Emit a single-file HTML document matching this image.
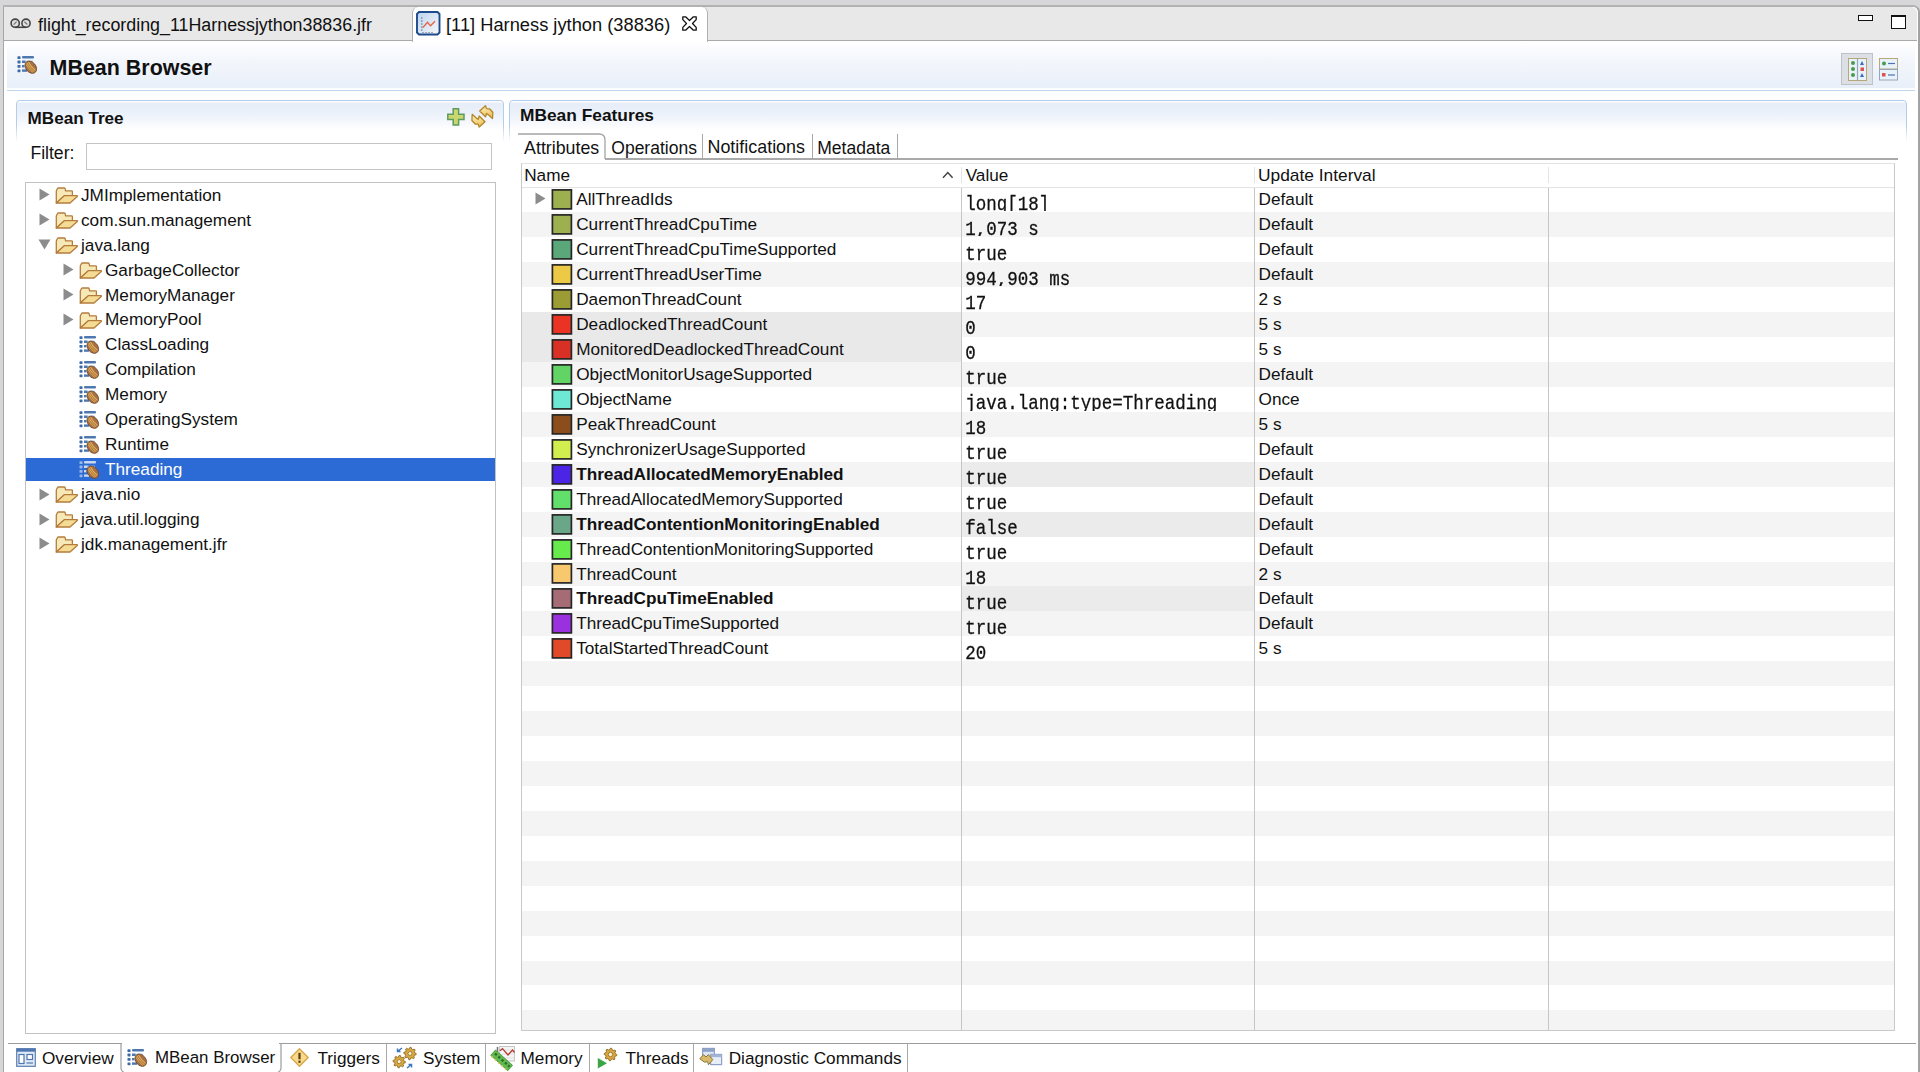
<!DOCTYPE html>
<html><head><meta charset="utf-8">
<style>
*{box-sizing:border-box;margin:0;padding:0}
html,body{width:1920px;height:1072px;overflow:hidden;background:#d7d7d9;font-family:"Liberation Sans",sans-serif;color:#111;font-size:17.2px}
.abs{position:absolute}
.t{position:absolute;white-space:nowrap;line-height:1}
svg{overflow:visible}
</style></head><body>
<div class="abs" style="left:3px;top:5px;width:1917px;height:1067px;background:#fff;border-left:1px solid #a6a6a6;border-top:2px solid #b2b2b2;border-right:2px solid #a3a3a3;border-top-right-radius:7px"></div>
<div class="abs" style="left:4px;top:7px;width:1913px;height:34px;background:#e8e8e8;border-bottom:1px solid #a9a9a9;border-top-right-radius:6px"></div>
<div class="abs" style="left:412px;top:7px;width:296px;height:35px;background:#fff;border-left:1px solid #b0b0b0;border-right:1px solid #b0b0b0;border-radius:6px 6px 0 0"></div>
<svg class="abs" style="left:10px;top:18px" width="22" height="12" viewBox="0 0 22 12"><circle cx="5.2" cy="5.2" r="4.1" fill="#e0e0e0" stroke="#444" stroke-width="1.6"/><circle cx="16" cy="5.2" r="4.1" fill="#e0e0e0" stroke="#444" stroke-width="1.6"/><path d="M5.2,9.3 L16,9.3" stroke="#444" stroke-width="1.6"/><path d="M3.6,6.6 L6.6,3.6" stroke="#777" stroke-width="1.3"/><path d="M14.4,3.8 L17.4,6.6" stroke="#777" stroke-width="1.3"/></svg>
<div class="t" style="left:38px;top:16.69px;font-size:17.85px;color:#111;font-family:'Liberation Sans',sans-serif;">flight_recording_11Harnessjython38836.jfr</div>
<svg class="abs" style="left:416px;top:11px" width="25" height="25" viewBox="0 0 25 25"><defs><linearGradient id="cg" x1="0" y1="0" x2="1" y2="1"><stop offset="0" stop-color="#bcd3f0"/><stop offset="1" stop-color="#f8f8f8"/></linearGradient></defs><path d="M3,1 L21.5,1 L23.5,3 L23.5,21.5 L21.5,23.5 L3,23.5 L1,21.5 L1,3 Z" fill="url(#cg)" stroke="#1d4a8c" stroke-width="1.9"/><path d="M6.8,16.6 L11.5,11.3 L14.5,14.8 L19,10.2" fill="none" stroke="#e8603c" stroke-width="1.3"/><path d="M5,7 h1.5 M5,10 h1.5 M5,13 h1.5 M5,16 h1.5 M5,19 h1.5 M7,21 v1 M10,21 v1 M13,21 v1 M16,21 v1" stroke="#4a6a80" stroke-width="1"/></svg>
<div class="t" style="left:446px;top:16.31px;font-size:18.3px;color:#111;font-family:'Liberation Sans',sans-serif;">[11] Harness jython (38836)</div>
<svg class="abs" style="left:682px;top:16px" width="15" height="15" viewBox="0 0 15 15"><path d="M0.8,0.8 L3.6,0.8 L7.5,4.5 L11.4,0.8 L14.2,0.8 L14.2,3.6 L10.5,7.5 L14.2,11.4 L14.2,14.2 L11.4,14.2 L7.5,10.5 L3.6,14.2 L0.8,14.2 L0.8,11.4 L4.5,7.5 L0.8,3.6 Z" fill="none" stroke="#111" stroke-width="1.3" stroke-linejoin="round"/></svg>
<div class="abs" style="left:1858px;top:15px;width:15px;height:5.5px;border:1.5px solid #111;background:#fff"></div>
<div class="abs" style="left:1891px;top:15px;width:14.5px;height:14px;border:1.5px solid #111;border-top-width:2.5px;background:#fff"></div>
<div class="abs" style="left:7px;top:42px;width:1908px;height:47px;background:linear-gradient(#ffffff 0%,#f4f7fc 35%,#e8eff9 100%)"></div>
<div class="abs" style="left:7px;top:88px;width:1908px;height:1px;background:#fbfcfe"></div>
<div class="abs" style="left:7px;top:89.6px;width:1908px;height:1.2px;background:#bed4ef"></div>
<svg class="abs" style="left:17px;top:55px" width="21" height="20" viewBox="0 0 21 20"><rect x="0.5" y="1.2" width="3" height="2.8" rx="0.6" fill="#3f6aa8"/><rect x="0.5" y="5.6" width="3" height="2.8" rx="0.6" fill="#3f6aa8"/><rect x="0.5" y="10.0" width="3" height="2.8" rx="0.6" fill="#3f6aa8"/><rect x="0.5" y="14.4" width="3" height="2.8" rx="0.6" fill="#3f6aa8"/><rect x="5" y="1.0" width="12" height="2.4" rx="1" fill="#4d78b0"/><rect x="5" y="5.6" width="11" height="2.4" fill="#a9c4e4" opacity="0.8"/><rect x="5" y="5.6" width="3.5" height="2.4" fill="#4d78b0"/><rect x="5" y="10" width="2.5" height="2.4" fill="#4d78b0"/><rect x="5" y="14.4" width="5" height="2.4" fill="#4d78b0"/><g transform="translate(13.8,12.2) rotate(50)"><ellipse cx="0" cy="0" rx="6.8" ry="5.0" fill="#a86f45" stroke="#6e4526" stroke-width="0.8"/><path d="M-5.5,-1.6 Q0,-0.2 5.5,-1.6" stroke="#e0b060" stroke-width="1.1" fill="none"/><path d="M-5.2,1.8 Q0,3.0 5.2,1.8" stroke="#d8a458" stroke-width="1.0" fill="none"/><path d="M-6,0.2 Q0,1.5 6,0.2" stroke="#e8c040" stroke-width="0.9" fill="none"/></g></svg>
<div class="t" style="left:49.6px;top:58.04px;font-size:21.45px;font-weight:bold;color:#111;font-family:'Liberation Sans',sans-serif;">MBean Browser</div>
<div class="abs" style="left:1841px;top:53px;width:32px;height:32px;background:#dcdfe4;border:1px solid #bfc3c9"></div>
<svg class="abs" style="left:1848px;top:58px" width="19" height="23" viewBox="0 0 19 23"><rect x="0.5" y="0.5" width="18" height="22" fill="#e8f2fa" stroke="#b6a878" stroke-width="1"/><path d="M9.5,0.5 V22.5" stroke="#9aa4b8" stroke-width="1.2"/><circle cx="5" cy="5" r="2" fill="#4a9a4a"/><circle cx="5" cy="11" r="2" fill="#4a9a4a"/><circle cx="5" cy="17" r="2" fill="#4a9a4a"/><path d="M12,7 L14,3 L16,7 Z" fill="#3a6ac0"/><rect x="12.5" y="9.5" width="3.5" height="3.5" fill="#e05050"/><path d="M12,19 L14,15 L16,19 Z" fill="#3a6ac0"/></svg>
<svg class="abs" style="left:1879px;top:58px" width="19" height="23" viewBox="0 0 19 23"><rect x="0.5" y="0.5" width="18" height="10.5" fill="#e8f2fa" stroke="#b6a878" stroke-width="1"/><rect x="0.5" y="11.5" width="18" height="10.5" fill="#e8f2fa" stroke="#9aa4b8" stroke-width="1"/><circle cx="5" cy="5.5" r="2" fill="#4a9a4a"/><path d="M9,5.5 H16" stroke="#5070b0" stroke-width="1.2"/><rect x="3" y="15" width="3.5" height="3.5" fill="#e05050"/><path d="M9,17 H16" stroke="#5070b0" stroke-width="1.2"/></svg>
<div class="abs" style="left:16px;top:100px;width:488px;height:42px;border:1px solid #b3cdeb;border-bottom:none;border-radius:4px 4px 0 0;background:linear-gradient(#fafcfe 0px,#fafcfe 1px,#e6edf8 2.5px,#ebf1fa 12px,#ffffff 30px);-webkit-mask-image:linear-gradient(#000 60%,transparent 100%)"></div>
<div class="t" style="left:27.6px;top:110.12px;font-size:17.1px;font-weight:bold;color:#111;font-family:'Liberation Sans',sans-serif;">MBean Tree</div>
<svg class="abs" style="left:447px;top:108px" width="18" height="18" viewBox="0 0 18 18"><path d="M6.2,0.8 H11.6 V6.2 H17 V11.6 H11.6 V17 H6.2 V11.6 H0.8 V6.2 H6.2 Z" fill="#c9d86e" stroke="#5f9a60" stroke-width="1.5"/></svg>
<svg class="abs" style="left:470px;top:103px" width="26" height="26" viewBox="0 0 26 26"><defs><linearGradient id="rg" x1="0" y1="0" x2="0.3" y2="1"><stop offset="0" stop-color="#fdf3cc"/><stop offset="1" stop-color="#eec25a"/></linearGradient></defs><g stroke="#b38628" stroke-width="1.3" stroke-linejoin="round" fill="url(#rg)"><path d="M9.7,8 L15.5,2.7 L16.5,5.6 L19.5,5.8 L22.8,9.3 L22.5,15.5 L18.4,11.7 L16.5,10.5 L15.5,13.8 Z"/><path d="M15,18.8 L9.2,24.1 L8.2,21.2 L5.2,21 L1.9,17.5 L2.2,11.3 L6.3,15.1 L8.2,16.3 L9.2,13 Z"/></g></svg>
<div class="t" style="left:30.4px;top:144.80px;font-size:17.6px;color:#111;font-family:'Liberation Sans',sans-serif;">Filter:</div>
<div class="abs" style="left:86px;top:143px;width:406px;height:27px;border:1px solid #c4c4c4;background:#fff"></div>
<div class="abs" style="left:25px;top:182px;width:471px;height:852px;border:1px solid #c2c2c2;background:#fff"></div>
<svg class="abs" style="left:39px;top:188px" width="11" height="13" viewBox="0 0 11 13"><path d="M0.5,0.5 L10.5,6.5 L0.5,12.5 Z" fill="#8c8c8c"/></svg>
<svg class="abs" style="left:55px;top:187px" width="24" height="18" viewBox="0 0 24 18"><path d="M1.3,16 V4 L2.5,1.5 Q2.8,1 3.6,1 H9.2 Q10,1 10.2,1.8 L10.6,3.8 H16.6 Q17.4,3.8 17.4,4.6 V9 H9.3 Z" fill="#f7e8b8" stroke="#b47c3c" stroke-width="1.3" stroke-linejoin="round"/><path d="M1.3,16 L9.3,8.7 H22 Q22.8,8.7 22.3,9.4 L15,16 Z" fill="#f5dc94" stroke="#b47c3c" stroke-width="1.3" stroke-linejoin="round"/></svg>
<div class="t" style="left:81px;top:186.74px;font-size:17.2px;color:#111;font-family:'Liberation Sans',sans-serif;">JMImplementation</div>
<svg class="abs" style="left:39px;top:213px" width="11" height="13" viewBox="0 0 11 13"><path d="M0.5,0.5 L10.5,6.5 L0.5,12.5 Z" fill="#8c8c8c"/></svg>
<svg class="abs" style="left:55px;top:212px" width="24" height="18" viewBox="0 0 24 18"><path d="M1.3,16 V4 L2.5,1.5 Q2.8,1 3.6,1 H9.2 Q10,1 10.2,1.8 L10.6,3.8 H16.6 Q17.4,3.8 17.4,4.6 V9 H9.3 Z" fill="#f7e8b8" stroke="#b47c3c" stroke-width="1.3" stroke-linejoin="round"/><path d="M1.3,16 L9.3,8.7 H22 Q22.8,8.7 22.3,9.4 L15,16 Z" fill="#f5dc94" stroke="#b47c3c" stroke-width="1.3" stroke-linejoin="round"/></svg>
<div class="t" style="left:81px;top:211.68px;font-size:17.2px;color:#111;font-family:'Liberation Sans',sans-serif;">com.sun.management</div>
<svg class="abs" style="left:38px;top:239px" width="13" height="11" viewBox="0 0 13 11"><path d="M0.5,0.5 L12.5,0.5 L6.5,10.5 Z" fill="#8c8c8c"/></svg>
<svg class="abs" style="left:55px;top:237px" width="24" height="18" viewBox="0 0 24 18"><path d="M1.3,16 V4 L2.5,1.5 Q2.8,1 3.6,1 H9.2 Q10,1 10.2,1.8 L10.6,3.8 H16.6 Q17.4,3.8 17.4,4.6 V9 H9.3 Z" fill="#f7e8b8" stroke="#b47c3c" stroke-width="1.3" stroke-linejoin="round"/><path d="M1.3,16 L9.3,8.7 H22 Q22.8,8.7 22.3,9.4 L15,16 Z" fill="#f5dc94" stroke="#b47c3c" stroke-width="1.3" stroke-linejoin="round"/></svg>
<div class="t" style="left:81px;top:236.62px;font-size:17.2px;color:#111;font-family:'Liberation Sans',sans-serif;">java.lang</div>
<svg class="abs" style="left:63px;top:263px" width="11" height="13" viewBox="0 0 11 13"><path d="M0.5,0.5 L10.5,6.5 L0.5,12.5 Z" fill="#8c8c8c"/></svg>
<svg class="abs" style="left:79px;top:262px" width="24" height="18" viewBox="0 0 24 18"><path d="M1.3,16 V4 L2.5,1.5 Q2.8,1 3.6,1 H9.2 Q10,1 10.2,1.8 L10.6,3.8 H16.6 Q17.4,3.8 17.4,4.6 V9 H9.3 Z" fill="#f7e8b8" stroke="#b47c3c" stroke-width="1.3" stroke-linejoin="round"/><path d="M1.3,16 L9.3,8.7 H22 Q22.8,8.7 22.3,9.4 L15,16 Z" fill="#f5dc94" stroke="#b47c3c" stroke-width="1.3" stroke-linejoin="round"/></svg>
<div class="t" style="left:105px;top:261.56px;font-size:17.2px;color:#111;font-family:'Liberation Sans',sans-serif;">GarbageCollector</div>
<svg class="abs" style="left:63px;top:288px" width="11" height="13" viewBox="0 0 11 13"><path d="M0.5,0.5 L10.5,6.5 L0.5,12.5 Z" fill="#8c8c8c"/></svg>
<svg class="abs" style="left:79px;top:287px" width="24" height="18" viewBox="0 0 24 18"><path d="M1.3,16 V4 L2.5,1.5 Q2.8,1 3.6,1 H9.2 Q10,1 10.2,1.8 L10.6,3.8 H16.6 Q17.4,3.8 17.4,4.6 V9 H9.3 Z" fill="#f7e8b8" stroke="#b47c3c" stroke-width="1.3" stroke-linejoin="round"/><path d="M1.3,16 L9.3,8.7 H22 Q22.8,8.7 22.3,9.4 L15,16 Z" fill="#f5dc94" stroke="#b47c3c" stroke-width="1.3" stroke-linejoin="round"/></svg>
<div class="t" style="left:105px;top:286.50px;font-size:17.2px;color:#111;font-family:'Liberation Sans',sans-serif;">MemoryManager</div>
<svg class="abs" style="left:63px;top:313px" width="11" height="13" viewBox="0 0 11 13"><path d="M0.5,0.5 L10.5,6.5 L0.5,12.5 Z" fill="#8c8c8c"/></svg>
<svg class="abs" style="left:79px;top:312px" width="24" height="18" viewBox="0 0 24 18"><path d="M1.3,16 V4 L2.5,1.5 Q2.8,1 3.6,1 H9.2 Q10,1 10.2,1.8 L10.6,3.8 H16.6 Q17.4,3.8 17.4,4.6 V9 H9.3 Z" fill="#f7e8b8" stroke="#b47c3c" stroke-width="1.3" stroke-linejoin="round"/><path d="M1.3,16 L9.3,8.7 H22 Q22.8,8.7 22.3,9.4 L15,16 Z" fill="#f5dc94" stroke="#b47c3c" stroke-width="1.3" stroke-linejoin="round"/></svg>
<div class="t" style="left:105px;top:311.44px;font-size:17.2px;color:#111;font-family:'Liberation Sans',sans-serif;">MemoryPool</div>
<svg class="abs" style="left:79px;top:335px" width="21" height="20" viewBox="0 0 21 20"><rect x="0.5" y="1.2" width="3" height="2.8" rx="0.6" fill="#3f6aa8"/><rect x="0.5" y="5.6" width="3" height="2.8" rx="0.6" fill="#3f6aa8"/><rect x="0.5" y="10.0" width="3" height="2.8" rx="0.6" fill="#3f6aa8"/><rect x="0.5" y="14.4" width="3" height="2.8" rx="0.6" fill="#3f6aa8"/><rect x="5" y="1.0" width="12" height="2.4" rx="1" fill="#4d78b0"/><rect x="5" y="5.6" width="11" height="2.4" fill="#a9c4e4" opacity="0.8"/><rect x="5" y="5.6" width="3.5" height="2.4" fill="#4d78b0"/><rect x="5" y="10" width="2.5" height="2.4" fill="#4d78b0"/><rect x="5" y="14.4" width="5" height="2.4" fill="#4d78b0"/><g transform="translate(13.8,12.2) rotate(50)"><ellipse cx="0" cy="0" rx="6.8" ry="5.0" fill="#a86f45" stroke="#6e4526" stroke-width="0.8"/><path d="M-5.5,-1.6 Q0,-0.2 5.5,-1.6" stroke="#e0b060" stroke-width="1.1" fill="none"/><path d="M-5.2,1.8 Q0,3.0 5.2,1.8" stroke="#d8a458" stroke-width="1.0" fill="none"/><path d="M-6,0.2 Q0,1.5 6,0.2" stroke="#e8c040" stroke-width="0.9" fill="none"/></g></svg>
<div class="t" style="left:105px;top:336.38px;font-size:17.2px;color:#111;font-family:'Liberation Sans',sans-serif;">ClassLoading</div>
<svg class="abs" style="left:79px;top:360px" width="21" height="20" viewBox="0 0 21 20"><rect x="0.5" y="1.2" width="3" height="2.8" rx="0.6" fill="#3f6aa8"/><rect x="0.5" y="5.6" width="3" height="2.8" rx="0.6" fill="#3f6aa8"/><rect x="0.5" y="10.0" width="3" height="2.8" rx="0.6" fill="#3f6aa8"/><rect x="0.5" y="14.4" width="3" height="2.8" rx="0.6" fill="#3f6aa8"/><rect x="5" y="1.0" width="12" height="2.4" rx="1" fill="#4d78b0"/><rect x="5" y="5.6" width="11" height="2.4" fill="#a9c4e4" opacity="0.8"/><rect x="5" y="5.6" width="3.5" height="2.4" fill="#4d78b0"/><rect x="5" y="10" width="2.5" height="2.4" fill="#4d78b0"/><rect x="5" y="14.4" width="5" height="2.4" fill="#4d78b0"/><g transform="translate(13.8,12.2) rotate(50)"><ellipse cx="0" cy="0" rx="6.8" ry="5.0" fill="#a86f45" stroke="#6e4526" stroke-width="0.8"/><path d="M-5.5,-1.6 Q0,-0.2 5.5,-1.6" stroke="#e0b060" stroke-width="1.1" fill="none"/><path d="M-5.2,1.8 Q0,3.0 5.2,1.8" stroke="#d8a458" stroke-width="1.0" fill="none"/><path d="M-6,0.2 Q0,1.5 6,0.2" stroke="#e8c040" stroke-width="0.9" fill="none"/></g></svg>
<div class="t" style="left:105px;top:361.32px;font-size:17.2px;color:#111;font-family:'Liberation Sans',sans-serif;">Compilation</div>
<svg class="abs" style="left:79px;top:385px" width="21" height="20" viewBox="0 0 21 20"><rect x="0.5" y="1.2" width="3" height="2.8" rx="0.6" fill="#3f6aa8"/><rect x="0.5" y="5.6" width="3" height="2.8" rx="0.6" fill="#3f6aa8"/><rect x="0.5" y="10.0" width="3" height="2.8" rx="0.6" fill="#3f6aa8"/><rect x="0.5" y="14.4" width="3" height="2.8" rx="0.6" fill="#3f6aa8"/><rect x="5" y="1.0" width="12" height="2.4" rx="1" fill="#4d78b0"/><rect x="5" y="5.6" width="11" height="2.4" fill="#a9c4e4" opacity="0.8"/><rect x="5" y="5.6" width="3.5" height="2.4" fill="#4d78b0"/><rect x="5" y="10" width="2.5" height="2.4" fill="#4d78b0"/><rect x="5" y="14.4" width="5" height="2.4" fill="#4d78b0"/><g transform="translate(13.8,12.2) rotate(50)"><ellipse cx="0" cy="0" rx="6.8" ry="5.0" fill="#a86f45" stroke="#6e4526" stroke-width="0.8"/><path d="M-5.5,-1.6 Q0,-0.2 5.5,-1.6" stroke="#e0b060" stroke-width="1.1" fill="none"/><path d="M-5.2,1.8 Q0,3.0 5.2,1.8" stroke="#d8a458" stroke-width="1.0" fill="none"/><path d="M-6,0.2 Q0,1.5 6,0.2" stroke="#e8c040" stroke-width="0.9" fill="none"/></g></svg>
<div class="t" style="left:105px;top:386.26px;font-size:17.2px;color:#111;font-family:'Liberation Sans',sans-serif;">Memory</div>
<svg class="abs" style="left:79px;top:410px" width="21" height="20" viewBox="0 0 21 20"><rect x="0.5" y="1.2" width="3" height="2.8" rx="0.6" fill="#3f6aa8"/><rect x="0.5" y="5.6" width="3" height="2.8" rx="0.6" fill="#3f6aa8"/><rect x="0.5" y="10.0" width="3" height="2.8" rx="0.6" fill="#3f6aa8"/><rect x="0.5" y="14.4" width="3" height="2.8" rx="0.6" fill="#3f6aa8"/><rect x="5" y="1.0" width="12" height="2.4" rx="1" fill="#4d78b0"/><rect x="5" y="5.6" width="11" height="2.4" fill="#a9c4e4" opacity="0.8"/><rect x="5" y="5.6" width="3.5" height="2.4" fill="#4d78b0"/><rect x="5" y="10" width="2.5" height="2.4" fill="#4d78b0"/><rect x="5" y="14.4" width="5" height="2.4" fill="#4d78b0"/><g transform="translate(13.8,12.2) rotate(50)"><ellipse cx="0" cy="0" rx="6.8" ry="5.0" fill="#a86f45" stroke="#6e4526" stroke-width="0.8"/><path d="M-5.5,-1.6 Q0,-0.2 5.5,-1.6" stroke="#e0b060" stroke-width="1.1" fill="none"/><path d="M-5.2,1.8 Q0,3.0 5.2,1.8" stroke="#d8a458" stroke-width="1.0" fill="none"/><path d="M-6,0.2 Q0,1.5 6,0.2" stroke="#e8c040" stroke-width="0.9" fill="none"/></g></svg>
<div class="t" style="left:105px;top:411.20px;font-size:17.2px;color:#111;font-family:'Liberation Sans',sans-serif;">OperatingSystem</div>
<svg class="abs" style="left:79px;top:435px" width="21" height="20" viewBox="0 0 21 20"><rect x="0.5" y="1.2" width="3" height="2.8" rx="0.6" fill="#3f6aa8"/><rect x="0.5" y="5.6" width="3" height="2.8" rx="0.6" fill="#3f6aa8"/><rect x="0.5" y="10.0" width="3" height="2.8" rx="0.6" fill="#3f6aa8"/><rect x="0.5" y="14.4" width="3" height="2.8" rx="0.6" fill="#3f6aa8"/><rect x="5" y="1.0" width="12" height="2.4" rx="1" fill="#4d78b0"/><rect x="5" y="5.6" width="11" height="2.4" fill="#a9c4e4" opacity="0.8"/><rect x="5" y="5.6" width="3.5" height="2.4" fill="#4d78b0"/><rect x="5" y="10" width="2.5" height="2.4" fill="#4d78b0"/><rect x="5" y="14.4" width="5" height="2.4" fill="#4d78b0"/><g transform="translate(13.8,12.2) rotate(50)"><ellipse cx="0" cy="0" rx="6.8" ry="5.0" fill="#a86f45" stroke="#6e4526" stroke-width="0.8"/><path d="M-5.5,-1.6 Q0,-0.2 5.5,-1.6" stroke="#e0b060" stroke-width="1.1" fill="none"/><path d="M-5.2,1.8 Q0,3.0 5.2,1.8" stroke="#d8a458" stroke-width="1.0" fill="none"/><path d="M-6,0.2 Q0,1.5 6,0.2" stroke="#e8c040" stroke-width="0.9" fill="none"/></g></svg>
<div class="t" style="left:105px;top:436.14px;font-size:17.2px;color:#111;font-family:'Liberation Sans',sans-serif;">Runtime</div>
<div class="abs" style="left:26px;top:458px;width:469px;height:23px;background:#2c6bd6"></div>
<svg class="abs" style="left:79px;top:460px" width="21" height="20" viewBox="0 0 21 20"><rect x="0.5" y="1.2" width="3" height="2.8" rx="0.6" fill="#9bb6de"/><rect x="0.5" y="5.6" width="3" height="2.8" rx="0.6" fill="#9bb6de"/><rect x="0.5" y="10.0" width="3" height="2.8" rx="0.6" fill="#9bb6de"/><rect x="0.5" y="14.4" width="3" height="2.8" rx="0.6" fill="#9bb6de"/><rect x="5" y="1.0" width="12" height="2.4" rx="1" fill="#c9d8f0"/><rect x="5" y="5.6" width="11" height="2.4" fill="#a9c4e4" opacity="0.8"/><rect x="5" y="5.6" width="3.5" height="2.4" fill="#c9d8f0"/><rect x="5" y="10" width="2.5" height="2.4" fill="#c9d8f0"/><rect x="5" y="14.4" width="5" height="2.4" fill="#c9d8f0"/><g transform="translate(13.8,12.2) rotate(50)"><ellipse cx="0" cy="0" rx="6.8" ry="5.0" fill="#a86f45" stroke="#6e4526" stroke-width="0.8"/><path d="M-5.5,-1.6 Q0,-0.2 5.5,-1.6" stroke="#e0b060" stroke-width="1.1" fill="none"/><path d="M-5.2,1.8 Q0,3.0 5.2,1.8" stroke="#d8a458" stroke-width="1.0" fill="none"/><path d="M-6,0.2 Q0,1.5 6,0.2" stroke="#e8c040" stroke-width="0.9" fill="none"/></g></svg>
<div class="t" style="left:105px;top:461.08px;font-size:17.2px;color:#fff;font-family:'Liberation Sans',sans-serif;">Threading</div>
<svg class="abs" style="left:39px;top:488px" width="11" height="13" viewBox="0 0 11 13"><path d="M0.5,0.5 L10.5,6.5 L0.5,12.5 Z" fill="#8c8c8c"/></svg>
<svg class="abs" style="left:55px;top:486px" width="24" height="18" viewBox="0 0 24 18"><path d="M1.3,16 V4 L2.5,1.5 Q2.8,1 3.6,1 H9.2 Q10,1 10.2,1.8 L10.6,3.8 H16.6 Q17.4,3.8 17.4,4.6 V9 H9.3 Z" fill="#f7e8b8" stroke="#b47c3c" stroke-width="1.3" stroke-linejoin="round"/><path d="M1.3,16 L9.3,8.7 H22 Q22.8,8.7 22.3,9.4 L15,16 Z" fill="#f5dc94" stroke="#b47c3c" stroke-width="1.3" stroke-linejoin="round"/></svg>
<div class="t" style="left:81px;top:486.02px;font-size:17.2px;color:#111;font-family:'Liberation Sans',sans-serif;">java.nio</div>
<svg class="abs" style="left:39px;top:513px" width="11" height="13" viewBox="0 0 11 13"><path d="M0.5,0.5 L10.5,6.5 L0.5,12.5 Z" fill="#8c8c8c"/></svg>
<svg class="abs" style="left:55px;top:511px" width="24" height="18" viewBox="0 0 24 18"><path d="M1.3,16 V4 L2.5,1.5 Q2.8,1 3.6,1 H9.2 Q10,1 10.2,1.8 L10.6,3.8 H16.6 Q17.4,3.8 17.4,4.6 V9 H9.3 Z" fill="#f7e8b8" stroke="#b47c3c" stroke-width="1.3" stroke-linejoin="round"/><path d="M1.3,16 L9.3,8.7 H22 Q22.8,8.7 22.3,9.4 L15,16 Z" fill="#f5dc94" stroke="#b47c3c" stroke-width="1.3" stroke-linejoin="round"/></svg>
<div class="t" style="left:81px;top:510.96px;font-size:17.2px;color:#111;font-family:'Liberation Sans',sans-serif;">java.util.logging</div>
<svg class="abs" style="left:39px;top:537px" width="11" height="13" viewBox="0 0 11 13"><path d="M0.5,0.5 L10.5,6.5 L0.5,12.5 Z" fill="#8c8c8c"/></svg>
<svg class="abs" style="left:55px;top:536px" width="24" height="18" viewBox="0 0 24 18"><path d="M1.3,16 V4 L2.5,1.5 Q2.8,1 3.6,1 H9.2 Q10,1 10.2,1.8 L10.6,3.8 H16.6 Q17.4,3.8 17.4,4.6 V9 H9.3 Z" fill="#f7e8b8" stroke="#b47c3c" stroke-width="1.3" stroke-linejoin="round"/><path d="M1.3,16 L9.3,8.7 H22 Q22.8,8.7 22.3,9.4 L15,16 Z" fill="#f5dc94" stroke="#b47c3c" stroke-width="1.3" stroke-linejoin="round"/></svg>
<div class="t" style="left:81px;top:535.90px;font-size:17.2px;color:#111;font-family:'Liberation Sans',sans-serif;">jdk.management.jfr</div>
<div class="abs" style="left:509px;top:100px;width:1398px;height:42px;border:1px solid #b3cdeb;border-bottom:none;border-radius:4px 4px 0 0;background:linear-gradient(#fafcfe 0px,#fafcfe 1px,#e6edf8 2.5px,#ebf1fa 12px,#ffffff 30px);-webkit-mask-image:linear-gradient(#000 60%,transparent 100%)"></div>
<div class="t" style="left:520px;top:107.11px;font-size:17.35px;font-weight:bold;color:#111;font-family:'Liberation Sans',sans-serif;">MBean Features</div>
<div class="abs" style="left:605px;top:158px;width:1293px;height:2px;background:#a9a9a9"></div>
<svg class="abs" style="left:517px;top:133px" width="92" height="28"><path d="M1,1 H82 Q88,1 88,7 V26" fill="#fff" stroke="#a4a4a4" stroke-width="1.3"/></svg>
<div class="abs" style="left:701.5px;top:134px;width:1.2px;height:25px;background:#a8a8a8"></div>
<div class="abs" style="left:811.5px;top:134px;width:1.2px;height:25px;background:#a8a8a8"></div>
<div class="abs" style="left:896.5px;top:134px;width:1.2px;height:25px;background:#a8a8a8"></div>
<div class="t" style="left:524.1px;top:139.73px;font-size:17.8px;color:#111;font-family:'Liberation Sans',sans-serif;">Attributes</div>
<div class="t" style="left:611.3px;top:139.79px;font-size:17.5px;color:#111;font-family:'Liberation Sans',sans-serif;">Operations</div>
<div class="t" style="left:707.5px;top:139.45px;font-size:17.9px;color:#111;font-family:'Liberation Sans',sans-serif;">Notifications</div>
<div class="t" style="left:817.3px;top:139.79px;font-size:17.5px;color:#111;font-family:'Liberation Sans',sans-serif;">Metadata</div>
<div class="abs" style="left:521px;top:163px;width:1374px;height:868px;border:1px solid #c9c9c9;border-top-color:#e2e2e2;background:#fff"></div>
<div class="abs" style="left:522px;top:187px;width:1372px;height:1px;background:#e3e3e3"></div>
<div class="abs" style="left:961px;top:167px;width:1px;height:16px;background:#e4e4e4"></div>
<div class="abs" style="left:1254px;top:167px;width:1px;height:16px;background:#e4e4e4"></div>
<div class="abs" style="left:1548px;top:167px;width:1px;height:16px;background:#e4e4e4"></div>
<div class="t" style="left:524.2px;top:166.84px;font-size:17.2px;color:#111;font-family:'Liberation Sans',sans-serif;">Name</div>
<svg class="abs" style="left:942px;top:171px" width="12" height="8" viewBox="0 0 12 8"><path d="M1,6.8 L5.8,1.5 L10.6,6.8" fill="none" stroke="#444" stroke-width="1.5"/></svg>
<div class="t" style="left:965.7px;top:166.84px;font-size:17.2px;color:#111;font-family:'Liberation Sans',sans-serif;">Value</div>
<div class="t" style="left:1258px;top:166.71px;font-size:17.35px;color:#111;font-family:'Liberation Sans',sans-serif;">Update Interval</div>
<div class="abs" style="left:522px;top:212px;width:1372px;height:25px;background:#f4f4f4"></div>
<div class="abs" style="left:522px;top:262px;width:1372px;height:25px;background:#f4f4f4"></div>
<div class="abs" style="left:522px;top:312px;width:1372px;height:25px;background:#f4f4f4"></div>
<div class="abs" style="left:522px;top:362px;width:1372px;height:25px;background:#f4f4f4"></div>
<div class="abs" style="left:522px;top:412px;width:1372px;height:25px;background:#f4f4f4"></div>
<div class="abs" style="left:522px;top:462px;width:1372px;height:25px;background:#f4f4f4"></div>
<div class="abs" style="left:522px;top:512px;width:1372px;height:25px;background:#f4f4f4"></div>
<div class="abs" style="left:522px;top:562px;width:1372px;height:24px;background:#f4f4f4"></div>
<div class="abs" style="left:522px;top:611px;width:1372px;height:25px;background:#f4f4f4"></div>
<div class="abs" style="left:522px;top:661px;width:1372px;height:25px;background:#f4f4f4"></div>
<div class="abs" style="left:522px;top:711px;width:1372px;height:25px;background:#f4f4f4"></div>
<div class="abs" style="left:522px;top:761px;width:1372px;height:25px;background:#f4f4f4"></div>
<div class="abs" style="left:522px;top:811px;width:1372px;height:25px;background:#f4f4f4"></div>
<div class="abs" style="left:522px;top:861px;width:1372px;height:25px;background:#f4f4f4"></div>
<div class="abs" style="left:522px;top:911px;width:1372px;height:25px;background:#f4f4f4"></div>
<div class="abs" style="left:522px;top:961px;width:1372px;height:24px;background:#f4f4f4"></div>
<div class="abs" style="left:522px;top:1010px;width:1372px;height:20px;background:#f4f4f4"></div>
<div class="abs" style="left:522px;top:312px;width:439px;height:25px;background:#e9e9e9"></div>
<div class="abs" style="left:522px;top:337px;width:439px;height:25px;background:#e9e9e9"></div>
<div class="abs" style="left:961px;top:188px;width:1px;height:842px;background:#c6c6c6"></div>
<div class="abs" style="left:1254px;top:188px;width:1px;height:842px;background:#c6c6c6"></div>
<div class="abs" style="left:1548px;top:188px;width:1px;height:842px;background:#c6c6c6"></div>
<svg class="abs" style="left:535px;top:192px" width="11" height="13" viewBox="0 0 11 13"><path d="M0.5,0.5 L10.5,6.5 L0.5,12.5 Z" fill="#8c8c8c"/></svg>
<svg class="abs" style="left:551px;top:188px" width="22" height="23" viewBox="0 0 22 23"><rect x="1.4" y="1.9" width="19" height="19" fill="#9daf4f" stroke="#262626" stroke-width="1.7"/></svg>
<div class="t" style="left:576.2px;top:191.44px;font-size:17.2px;color:#111;font-family:'Liberation Sans',sans-serif;">AllThreadIds</div>
<div class="abs" style="left:963px;top:187px;width:290px;height:24px;overflow:hidden"><div class="t" style="left:2.2px;top:9.69px;font-size:17.5px;font-family:'Liberation Mono',monospace;transform:scaleY(1.15);transform-origin:0 13.41px;-webkit-text-stroke:0.25px #111">long[18]</div></div>
<div class="t" style="left:1258.6px;top:191.44px;font-size:17.2px;color:#111;font-family:'Liberation Sans',sans-serif;">Default</div>
<svg class="abs" style="left:551px;top:213px" width="22" height="23" viewBox="0 0 22 23"><rect x="1.4" y="1.9" width="19" height="19" fill="#9daf4f" stroke="#262626" stroke-width="1.7"/></svg>
<div class="t" style="left:576.2px;top:216.38px;font-size:17.2px;color:#111;font-family:'Liberation Sans',sans-serif;">CurrentThreadCpuTime</div>
<div class="abs" style="left:963px;top:212px;width:290px;height:24px;overflow:hidden"><div class="t" style="left:2.2px;top:9.63px;font-size:17.5px;font-family:'Liberation Mono',monospace;transform:scaleY(1.15);transform-origin:0 13.41px;-webkit-text-stroke:0.25px #111">1,073 s</div></div>
<div class="t" style="left:1258.6px;top:216.38px;font-size:17.2px;color:#111;font-family:'Liberation Sans',sans-serif;">Default</div>
<svg class="abs" style="left:551px;top:238px" width="22" height="23" viewBox="0 0 22 23"><rect x="1.4" y="1.9" width="19" height="19" fill="#5aa87a" stroke="#262626" stroke-width="1.7"/></svg>
<div class="t" style="left:576.2px;top:241.32px;font-size:17.2px;color:#111;font-family:'Liberation Sans',sans-serif;">CurrentThreadCpuTimeSupported</div>
<div class="abs" style="left:963px;top:237px;width:290px;height:24px;overflow:hidden"><div class="t" style="left:2.2px;top:9.57px;font-size:17.5px;font-family:'Liberation Mono',monospace;transform:scaleY(1.15);transform-origin:0 13.41px;-webkit-text-stroke:0.25px #111">true</div></div>
<div class="t" style="left:1258.6px;top:241.32px;font-size:17.2px;color:#111;font-family:'Liberation Sans',sans-serif;">Default</div>
<svg class="abs" style="left:551px;top:263px" width="22" height="23" viewBox="0 0 22 23"><rect x="1.4" y="1.9" width="19" height="19" fill="#ecca45" stroke="#262626" stroke-width="1.7"/></svg>
<div class="t" style="left:576.2px;top:266.26px;font-size:17.2px;color:#111;font-family:'Liberation Sans',sans-serif;">CurrentThreadUserTime</div>
<div class="abs" style="left:963px;top:262px;width:290px;height:24px;overflow:hidden"><div class="t" style="left:2.2px;top:9.51px;font-size:17.5px;font-family:'Liberation Mono',monospace;transform:scaleY(1.15);transform-origin:0 13.41px;-webkit-text-stroke:0.25px #111">994,903 ms</div></div>
<div class="t" style="left:1258.6px;top:266.26px;font-size:17.2px;color:#111;font-family:'Liberation Sans',sans-serif;">Default</div>
<svg class="abs" style="left:551px;top:288px" width="22" height="23" viewBox="0 0 22 23"><rect x="1.4" y="1.9" width="19" height="19" fill="#9c9c35" stroke="#262626" stroke-width="1.7"/></svg>
<div class="t" style="left:576.2px;top:291.20px;font-size:17.2px;color:#111;font-family:'Liberation Sans',sans-serif;">DaemonThreadCount</div>
<div class="abs" style="left:963px;top:287px;width:290px;height:24px;overflow:hidden"><div class="t" style="left:2.2px;top:9.45px;font-size:17.5px;font-family:'Liberation Mono',monospace;transform:scaleY(1.15);transform-origin:0 13.41px;-webkit-text-stroke:0.25px #111">17</div></div>
<div class="t" style="left:1258.6px;top:291.20px;font-size:17.2px;color:#111;font-family:'Liberation Sans',sans-serif;">2 s</div>
<svg class="abs" style="left:551px;top:313px" width="22" height="23" viewBox="0 0 22 23"><rect x="1.4" y="1.9" width="19" height="19" fill="#ea3323" stroke="#262626" stroke-width="1.7"/></svg>
<div class="t" style="left:576.2px;top:316.14px;font-size:17.2px;color:#111;font-family:'Liberation Sans',sans-serif;">DeadlockedThreadCount</div>
<div class="abs" style="left:963px;top:312px;width:290px;height:24px;overflow:hidden"><div class="t" style="left:2.2px;top:9.39px;font-size:17.5px;font-family:'Liberation Mono',monospace;transform:scaleY(1.15);transform-origin:0 13.41px;-webkit-text-stroke:0.25px #111">0</div></div>
<div class="t" style="left:1258.6px;top:316.14px;font-size:17.2px;color:#111;font-family:'Liberation Sans',sans-serif;">5 s</div>
<svg class="abs" style="left:551px;top:338px" width="22" height="23" viewBox="0 0 22 23"><rect x="1.4" y="1.9" width="19" height="19" fill="#d83025" stroke="#262626" stroke-width="1.7"/></svg>
<div class="t" style="left:576.2px;top:341.08px;font-size:17.2px;color:#111;font-family:'Liberation Sans',sans-serif;">MonitoredDeadlockedThreadCount</div>
<div class="abs" style="left:963px;top:337px;width:290px;height:24px;overflow:hidden"><div class="t" style="left:2.2px;top:9.33px;font-size:17.5px;font-family:'Liberation Mono',monospace;transform:scaleY(1.15);transform-origin:0 13.41px;-webkit-text-stroke:0.25px #111">0</div></div>
<div class="t" style="left:1258.6px;top:341.08px;font-size:17.2px;color:#111;font-family:'Liberation Sans',sans-serif;">5 s</div>
<svg class="abs" style="left:551px;top:363px" width="22" height="23" viewBox="0 0 22 23"><rect x="1.4" y="1.9" width="19" height="19" fill="#62d465" stroke="#262626" stroke-width="1.7"/></svg>
<div class="t" style="left:576.2px;top:366.02px;font-size:17.2px;color:#111;font-family:'Liberation Sans',sans-serif;">ObjectMonitorUsageSupported</div>
<div class="abs" style="left:963px;top:362px;width:290px;height:24px;overflow:hidden"><div class="t" style="left:2.2px;top:9.27px;font-size:17.5px;font-family:'Liberation Mono',monospace;transform:scaleY(1.15);transform-origin:0 13.41px;-webkit-text-stroke:0.25px #111">true</div></div>
<div class="t" style="left:1258.6px;top:366.02px;font-size:17.2px;color:#111;font-family:'Liberation Sans',sans-serif;">Default</div>
<svg class="abs" style="left:551px;top:388px" width="22" height="23" viewBox="0 0 22 23"><rect x="1.4" y="1.9" width="19" height="19" fill="#6de8d4" stroke="#262626" stroke-width="1.7"/></svg>
<div class="t" style="left:576.2px;top:390.96px;font-size:17.2px;color:#111;font-family:'Liberation Sans',sans-serif;">ObjectName</div>
<div class="abs" style="left:963px;top:387px;width:290px;height:24px;overflow:hidden"><div class="t" style="left:2.2px;top:9.21px;font-size:17.5px;font-family:'Liberation Mono',monospace;transform:scaleY(1.15);transform-origin:0 13.41px;-webkit-text-stroke:0.25px #111">java.lang:type=Threading</div></div>
<div class="t" style="left:1258.6px;top:390.96px;font-size:17.2px;color:#111;font-family:'Liberation Sans',sans-serif;">Once</div>
<svg class="abs" style="left:551px;top:413px" width="22" height="23" viewBox="0 0 22 23"><rect x="1.4" y="1.9" width="19" height="19" fill="#8c4d1d" stroke="#262626" stroke-width="1.7"/></svg>
<div class="t" style="left:576.2px;top:415.90px;font-size:17.2px;color:#111;font-family:'Liberation Sans',sans-serif;">PeakThreadCount</div>
<div class="abs" style="left:963px;top:412px;width:290px;height:24px;overflow:hidden"><div class="t" style="left:2.2px;top:9.15px;font-size:17.5px;font-family:'Liberation Mono',monospace;transform:scaleY(1.15);transform-origin:0 13.41px;-webkit-text-stroke:0.25px #111">18</div></div>
<div class="t" style="left:1258.6px;top:415.90px;font-size:17.2px;color:#111;font-family:'Liberation Sans',sans-serif;">5 s</div>
<svg class="abs" style="left:551px;top:438px" width="22" height="23" viewBox="0 0 22 23"><rect x="1.4" y="1.9" width="19" height="19" fill="#d2ee4e" stroke="#262626" stroke-width="1.7"/></svg>
<div class="t" style="left:576.2px;top:440.84px;font-size:17.2px;color:#111;font-family:'Liberation Sans',sans-serif;">SynchronizerUsageSupported</div>
<div class="abs" style="left:963px;top:437px;width:290px;height:24px;overflow:hidden"><div class="t" style="left:2.2px;top:9.09px;font-size:17.5px;font-family:'Liberation Mono',monospace;transform:scaleY(1.15);transform-origin:0 13.41px;-webkit-text-stroke:0.25px #111">true</div></div>
<div class="t" style="left:1258.6px;top:440.84px;font-size:17.2px;color:#111;font-family:'Liberation Sans',sans-serif;">Default</div>
<div class="abs" style="left:962px;top:462px;width:292px;height:25px;background:#ebebeb"></div>
<svg class="abs" style="left:551px;top:463px" width="22" height="23" viewBox="0 0 22 23"><rect x="1.4" y="1.9" width="19" height="19" fill="#4b24e6" stroke="#262626" stroke-width="1.7"/></svg>
<div class="t" style="left:576.2px;top:465.78px;font-size:17.2px;font-weight:bold;color:#111;font-family:'Liberation Sans',sans-serif;">ThreadAllocatedMemoryEnabled</div>
<div class="abs" style="left:963px;top:462px;width:290px;height:24px;overflow:hidden"><div class="t" style="left:2.2px;top:9.03px;font-size:17.5px;font-family:'Liberation Mono',monospace;transform:scaleY(1.15);transform-origin:0 13.41px;-webkit-text-stroke:0.25px #111">true</div></div>
<div class="t" style="left:1258.6px;top:465.78px;font-size:17.2px;color:#111;font-family:'Liberation Sans',sans-serif;">Default</div>
<svg class="abs" style="left:551px;top:488px" width="22" height="23" viewBox="0 0 22 23"><rect x="1.4" y="1.9" width="19" height="19" fill="#62de6a" stroke="#262626" stroke-width="1.7"/></svg>
<div class="t" style="left:576.2px;top:490.72px;font-size:17.2px;color:#111;font-family:'Liberation Sans',sans-serif;">ThreadAllocatedMemorySupported</div>
<div class="abs" style="left:963px;top:487px;width:290px;height:24px;overflow:hidden"><div class="t" style="left:2.2px;top:8.97px;font-size:17.5px;font-family:'Liberation Mono',monospace;transform:scaleY(1.15);transform-origin:0 13.41px;-webkit-text-stroke:0.25px #111">true</div></div>
<div class="t" style="left:1258.6px;top:490.72px;font-size:17.2px;color:#111;font-family:'Liberation Sans',sans-serif;">Default</div>
<div class="abs" style="left:962px;top:512px;width:292px;height:25px;background:#ebebeb"></div>
<svg class="abs" style="left:551px;top:513px" width="22" height="23" viewBox="0 0 22 23"><rect x="1.4" y="1.9" width="19" height="19" fill="#6aa688" stroke="#262626" stroke-width="1.7"/></svg>
<div class="t" style="left:576.2px;top:515.66px;font-size:17.2px;font-weight:bold;color:#111;font-family:'Liberation Sans',sans-serif;">ThreadContentionMonitoringEnabled</div>
<div class="abs" style="left:963px;top:512px;width:290px;height:24px;overflow:hidden"><div class="t" style="left:2.2px;top:8.91px;font-size:17.5px;font-family:'Liberation Mono',monospace;transform:scaleY(1.15);transform-origin:0 13.41px;-webkit-text-stroke:0.25px #111">false</div></div>
<div class="t" style="left:1258.6px;top:515.66px;font-size:17.2px;color:#111;font-family:'Liberation Sans',sans-serif;">Default</div>
<svg class="abs" style="left:551px;top:538px" width="22" height="23" viewBox="0 0 22 23"><rect x="1.4" y="1.9" width="19" height="19" fill="#66ea4c" stroke="#262626" stroke-width="1.7"/></svg>
<div class="t" style="left:576.2px;top:540.60px;font-size:17.2px;color:#111;font-family:'Liberation Sans',sans-serif;">ThreadContentionMonitoringSupported</div>
<div class="abs" style="left:963px;top:537px;width:290px;height:24px;overflow:hidden"><div class="t" style="left:2.2px;top:8.85px;font-size:17.5px;font-family:'Liberation Mono',monospace;transform:scaleY(1.15);transform-origin:0 13.41px;-webkit-text-stroke:0.25px #111">true</div></div>
<div class="t" style="left:1258.6px;top:540.60px;font-size:17.2px;color:#111;font-family:'Liberation Sans',sans-serif;">Default</div>
<svg class="abs" style="left:551px;top:562px" width="22" height="23" viewBox="0 0 22 23"><rect x="1.4" y="1.9" width="19" height="19" fill="#f7c86e" stroke="#262626" stroke-width="1.7"/></svg>
<div class="t" style="left:576.2px;top:565.54px;font-size:17.2px;color:#111;font-family:'Liberation Sans',sans-serif;">ThreadCount</div>
<div class="abs" style="left:963px;top:562px;width:290px;height:23px;overflow:hidden"><div class="t" style="left:2.2px;top:8.79px;font-size:17.5px;font-family:'Liberation Mono',monospace;transform:scaleY(1.15);transform-origin:0 13.41px;-webkit-text-stroke:0.25px #111">18</div></div>
<div class="t" style="left:1258.6px;top:565.54px;font-size:17.2px;color:#111;font-family:'Liberation Sans',sans-serif;">2 s</div>
<div class="abs" style="left:962px;top:586px;width:292px;height:25px;background:#ebebeb"></div>
<svg class="abs" style="left:551px;top:587px" width="22" height="23" viewBox="0 0 22 23"><rect x="1.4" y="1.9" width="19" height="19" fill="#a56c76" stroke="#262626" stroke-width="1.7"/></svg>
<div class="t" style="left:576.2px;top:590.48px;font-size:17.2px;font-weight:bold;color:#111;font-family:'Liberation Sans',sans-serif;">ThreadCpuTimeEnabled</div>
<div class="abs" style="left:963px;top:586px;width:290px;height:24px;overflow:hidden"><div class="t" style="left:2.2px;top:9.73px;font-size:17.5px;font-family:'Liberation Mono',monospace;transform:scaleY(1.15);transform-origin:0 13.41px;-webkit-text-stroke:0.25px #111">true</div></div>
<div class="t" style="left:1258.6px;top:590.48px;font-size:17.2px;color:#111;font-family:'Liberation Sans',sans-serif;">Default</div>
<svg class="abs" style="left:551px;top:612px" width="22" height="23" viewBox="0 0 22 23"><rect x="1.4" y="1.9" width="19" height="19" fill="#9a30e0" stroke="#262626" stroke-width="1.7"/></svg>
<div class="t" style="left:576.2px;top:615.42px;font-size:17.2px;color:#111;font-family:'Liberation Sans',sans-serif;">ThreadCpuTimeSupported</div>
<div class="abs" style="left:963px;top:611px;width:290px;height:24px;overflow:hidden"><div class="t" style="left:2.2px;top:9.67px;font-size:17.5px;font-family:'Liberation Mono',monospace;transform:scaleY(1.15);transform-origin:0 13.41px;-webkit-text-stroke:0.25px #111">true</div></div>
<div class="t" style="left:1258.6px;top:615.42px;font-size:17.2px;color:#111;font-family:'Liberation Sans',sans-serif;">Default</div>
<svg class="abs" style="left:551px;top:637px" width="22" height="23" viewBox="0 0 22 23"><rect x="1.4" y="1.9" width="19" height="19" fill="#e04a28" stroke="#262626" stroke-width="1.7"/></svg>
<div class="t" style="left:576.2px;top:640.36px;font-size:17.2px;color:#111;font-family:'Liberation Sans',sans-serif;">TotalStartedThreadCount</div>
<div class="abs" style="left:963px;top:636px;width:290px;height:24px;overflow:hidden"><div class="t" style="left:2.2px;top:9.61px;font-size:17.5px;font-family:'Liberation Mono',monospace;transform:scaleY(1.15);transform-origin:0 13.41px;-webkit-text-stroke:0.25px #111">20</div></div>
<div class="t" style="left:1258.6px;top:640.36px;font-size:17.2px;color:#111;font-family:'Liberation Sans',sans-serif;">5 s</div>
<div class="abs" style="left:8px;top:1043px;width:1908px;height:1px;background:#9c9c9c"></div>
<div class="abs" style="left:121.7px;top:1042px;width:157.6px;height:3px;background:#fff"></div>
<svg class="abs" style="left:112px;top:1043px" width="180" height="30"><path d="M9,0.7 V25 Q9,28 13,30" fill="none" stroke="#a4a4a4" stroke-width="1.3"/><path d="M169,0.7 V25 Q169,28 165,30" fill="none" stroke="#a4a4a4" stroke-width="1.3"/></svg>
<div class="abs" style="left:386px;top:1043px;width:1.3px;height:29px;background:#a8a8a8"></div>
<div class="abs" style="left:484.5px;top:1043px;width:1.3px;height:29px;background:#a8a8a8"></div>
<div class="abs" style="left:589px;top:1043px;width:1.3px;height:29px;background:#a8a8a8"></div>
<div class="abs" style="left:692.5px;top:1043px;width:1.3px;height:29px;background:#a8a8a8"></div>
<div class="abs" style="left:907px;top:1043px;width:1.3px;height:29px;background:#a8a8a8"></div>
<svg class="abs" style="left:16px;top:1048px" width="20" height="19" viewBox="0 0 20 19"><rect x="0.7" y="0.7" width="18.6" height="17.6" fill="#dfeaf7" stroke="#5d7fb0" stroke-width="1.2"/><rect x="0.7" y="0.7" width="18.6" height="3" fill="#4f76b0"/><rect x="3" y="6.5" width="5" height="9" fill="#fff" stroke="#4f76b0" stroke-width="1.2"/><rect x="11" y="6.5" width="5.5" height="5" fill="#fff" stroke="#4f76b0" stroke-width="1.2"/><path d="M10.5,15 H17" stroke="#4f76b0" stroke-width="1.2"/></svg>
<div class="t" style="left:42px;top:1049.64px;font-size:17.2px;color:#111;font-family:'Liberation Sans',sans-serif;">Overview</div>
<svg class="abs" style="left:127px;top:1048px" width="21" height="20" viewBox="0 0 21 20"><rect x="0.5" y="1.2" width="3" height="2.8" rx="0.6" fill="#3f6aa8"/><rect x="0.5" y="5.6" width="3" height="2.8" rx="0.6" fill="#3f6aa8"/><rect x="0.5" y="10.0" width="3" height="2.8" rx="0.6" fill="#3f6aa8"/><rect x="0.5" y="14.4" width="3" height="2.8" rx="0.6" fill="#3f6aa8"/><rect x="5" y="1.0" width="12" height="2.4" rx="1" fill="#4d78b0"/><rect x="5" y="5.6" width="11" height="2.4" fill="#a9c4e4" opacity="0.8"/><rect x="5" y="5.6" width="3.5" height="2.4" fill="#4d78b0"/><rect x="5" y="10" width="2.5" height="2.4" fill="#4d78b0"/><rect x="5" y="14.4" width="5" height="2.4" fill="#4d78b0"/><g transform="translate(13.8,12.2) rotate(50)"><ellipse cx="0" cy="0" rx="6.8" ry="5.0" fill="#a86f45" stroke="#6e4526" stroke-width="0.8"/><path d="M-5.5,-1.6 Q0,-0.2 5.5,-1.6" stroke="#e0b060" stroke-width="1.1" fill="none"/><path d="M-5.2,1.8 Q0,3.0 5.2,1.8" stroke="#d8a458" stroke-width="1.0" fill="none"/><path d="M-6,0.2 Q0,1.5 6,0.2" stroke="#e8c040" stroke-width="0.9" fill="none"/></g></svg>
<div class="t" style="left:155px;top:1049.69px;font-size:16.9px;color:#111;font-family:'Liberation Sans',sans-serif;">MBean Browser</div>
<svg class="abs" style="left:290px;top:1048px" width="19" height="19" viewBox="0 0 19 19"><path d="M9.5,0.8 L18.2,9.5 L9.5,18.2 L0.8,9.5 Z" fill="#f9d98a" stroke="#d7a648" stroke-width="1.3" stroke-linejoin="round"/><rect x="8.4" y="4.8" width="2.2" height="6.5" fill="#5a4010"/><rect x="8.4" y="12.6" width="2.2" height="2.2" fill="#5a4010"/></svg>
<div class="t" style="left:317.5px;top:1049.64px;font-size:17.2px;color:#111;font-family:'Liberation Sans',sans-serif;">Triggers</div>
<svg class="abs" style="left:393px;top:1047px" width="25" height="22" viewBox="0 0 25 22"><path d="M23.20,6.50 L23.08,7.71 L21.25,8.26 L20.82,9.06 L21.38,10.88 L20.44,11.66 L18.76,10.75 L17.90,11.01 L17.00,12.70 L15.79,12.58 L15.24,10.75 L14.44,10.32 L12.62,10.88 L11.84,9.94 L12.75,8.26 L12.49,7.40 L10.80,6.50 L10.92,5.29 L12.75,4.74 L13.18,3.94 L12.62,2.12 L13.56,1.34 L15.24,2.25 L16.10,1.99 L17.00,0.30 L18.21,0.42 L18.76,2.25 L19.56,2.68 L21.38,2.12 L22.16,3.06 L21.25,4.74 L21.51,5.60 Z" fill="#d8a843" stroke="#8c6a20" stroke-width="0.9" stroke-linejoin="round"/><circle cx="17" cy="6.5" r="2" fill="#f7efd0" stroke="#8c6a20" stroke-width="0.7"/><path d="M12.40,14.60 L12.28,15.81 L10.45,16.36 L10.02,17.16 L10.58,18.98 L9.64,19.76 L7.96,18.85 L7.10,19.11 L6.20,20.80 L4.99,20.68 L4.44,18.85 L3.64,18.42 L1.82,18.98 L1.04,18.04 L1.95,16.36 L1.69,15.50 L0.00,14.60 L0.12,13.39 L1.95,12.84 L2.38,12.04 L1.82,10.22 L2.76,9.44 L4.44,10.35 L5.30,10.09 L6.20,8.40 L7.41,8.52 L7.96,10.35 L8.76,10.78 L10.58,10.22 L11.36,11.16 L10.45,12.84 L10.71,13.70 Z" fill="#d8a843" stroke="#8c6a20" stroke-width="0.9" stroke-linejoin="round"/><circle cx="6.2" cy="14.6" r="2" fill="#f7efd0" stroke="#8c6a20" stroke-width="0.7"/><path d="M9,1 L4.5,4.5 M4.5,1.5 L4.5,4.5 L7.5,4.5" stroke="#3a78c0" stroke-width="1.5" fill="none"/><path d="M14,21 L18.5,17.5 M18.5,20.5 L18.5,17.5 L15.5,17.5" stroke="#3a78c0" stroke-width="1.5" fill="none"/></svg>
<div class="t" style="left:423px;top:1049.64px;font-size:17.2px;color:#111;font-family:'Liberation Sans',sans-serif;">System</div>
<svg class="abs" style="left:489px;top:1045px" width="27" height="25" viewBox="0 0 27 25"><rect x="10.5" y="1.5" width="15" height="14.5" fill="#f4f4f4" stroke="#c6c6c6" stroke-width="1"/><path d="M11,5 H25 M11,9 H25 M11,13 H25" stroke="#dedede" stroke-width="0.8"/><path d="M11,5.8 L13.5,3.6 L19,10 L23.5,5 L25.5,7.5" fill="none" stroke="#b03a30" stroke-width="1.3"/><path d="M8.5,2 V7" stroke="#777" stroke-width="1.6"/><g transform="translate(12.5,15.5) rotate(42)"><rect x="-11.5" y="-3.8" width="23" height="7.2" fill="#5fba4f" stroke="#3d8a30" stroke-width="0.7"/><path d="M-9.5,-0.8 h2.4 M-5,-0.8 h2.4 M-0.5,-0.8 h2.4 M4,-0.8 h2.4 M8.2,-0.8 h2" stroke="#2f6a25" stroke-width="2.2"/><path d="M-10,3.6 h1.6 M-5.5,3.6 h1.6 M-1,3.6 h1.6 M3.5,3.6 h1.6 M8,3.6 h1.6" stroke="#e6c24a" stroke-width="1.6"/></g></svg>
<div class="t" style="left:520.5px;top:1049.64px;font-size:17.2px;color:#111;font-family:'Liberation Sans',sans-serif;">Memory</div>
<svg class="abs" style="left:597px;top:1047px" width="22" height="22" viewBox="0 0 22 22"><path d="M0.8,11 L0.8,21.5 L10,16.2 Z" fill="#3ca444"/><path d="M19.80,7.50 L19.68,8.73 L17.93,9.34 L17.49,10.17 L17.95,11.95 L17.00,12.74 L15.34,11.93 L14.44,12.21 L13.50,13.80 L12.27,13.68 L11.66,11.93 L10.83,11.49 L9.05,11.95 L8.26,11.00 L9.07,9.34 L8.79,8.44 L7.20,7.50 L7.32,6.27 L9.07,5.66 L9.51,4.83 L9.05,3.05 L10.00,2.26 L11.66,3.07 L12.56,2.79 L13.50,1.20 L14.73,1.32 L15.34,3.07 L16.17,3.51 L17.95,3.05 L18.74,4.00 L17.93,5.66 L18.21,6.56 Z" fill="#d9a640" stroke="#8c6a20" stroke-width="0.9" stroke-linejoin="round"/><circle cx="13.5" cy="7.5" r="2.2" fill="#f7efd0" stroke="#8c6a20" stroke-width="0.8"/></svg>
<div class="t" style="left:625.6px;top:1049.64px;font-size:17.2px;color:#111;font-family:'Liberation Sans',sans-serif;">Threads</div>
<svg class="abs" style="left:699px;top:1047px" width="24" height="21" viewBox="0 0 24 21"><rect x="3.6" y="1.4" width="11.8" height="9" fill="#dfe7f4" stroke="#8ea2c8" stroke-width="1.2"/><rect x="3.6" y="1.4" width="11.8" height="3.4" fill="#8ea2c8"/><rect x="11.6" y="7.4" width="11" height="10.2" fill="#e8eef8" stroke="#8ea2c8" stroke-width="1.2"/><rect x="11.6" y="7.4" width="11" height="2.8" fill="#a4b4d4"/><path d="M0.8,11.8 L4.5,7.6 L7,10 L9.4,7.6 L13.8,12.6 L9.4,17.8 L8.6,14.6 L5.5,15.2 Z" fill="#d9b96a" stroke="#8a7838" stroke-width="1" stroke-linejoin="round"/></svg>
<div class="t" style="left:728.7px;top:1049.54px;font-size:17.2px;color:#111;font-family:'Liberation Sans',sans-serif;">Diagnostic Commands</div>
</body></html>
